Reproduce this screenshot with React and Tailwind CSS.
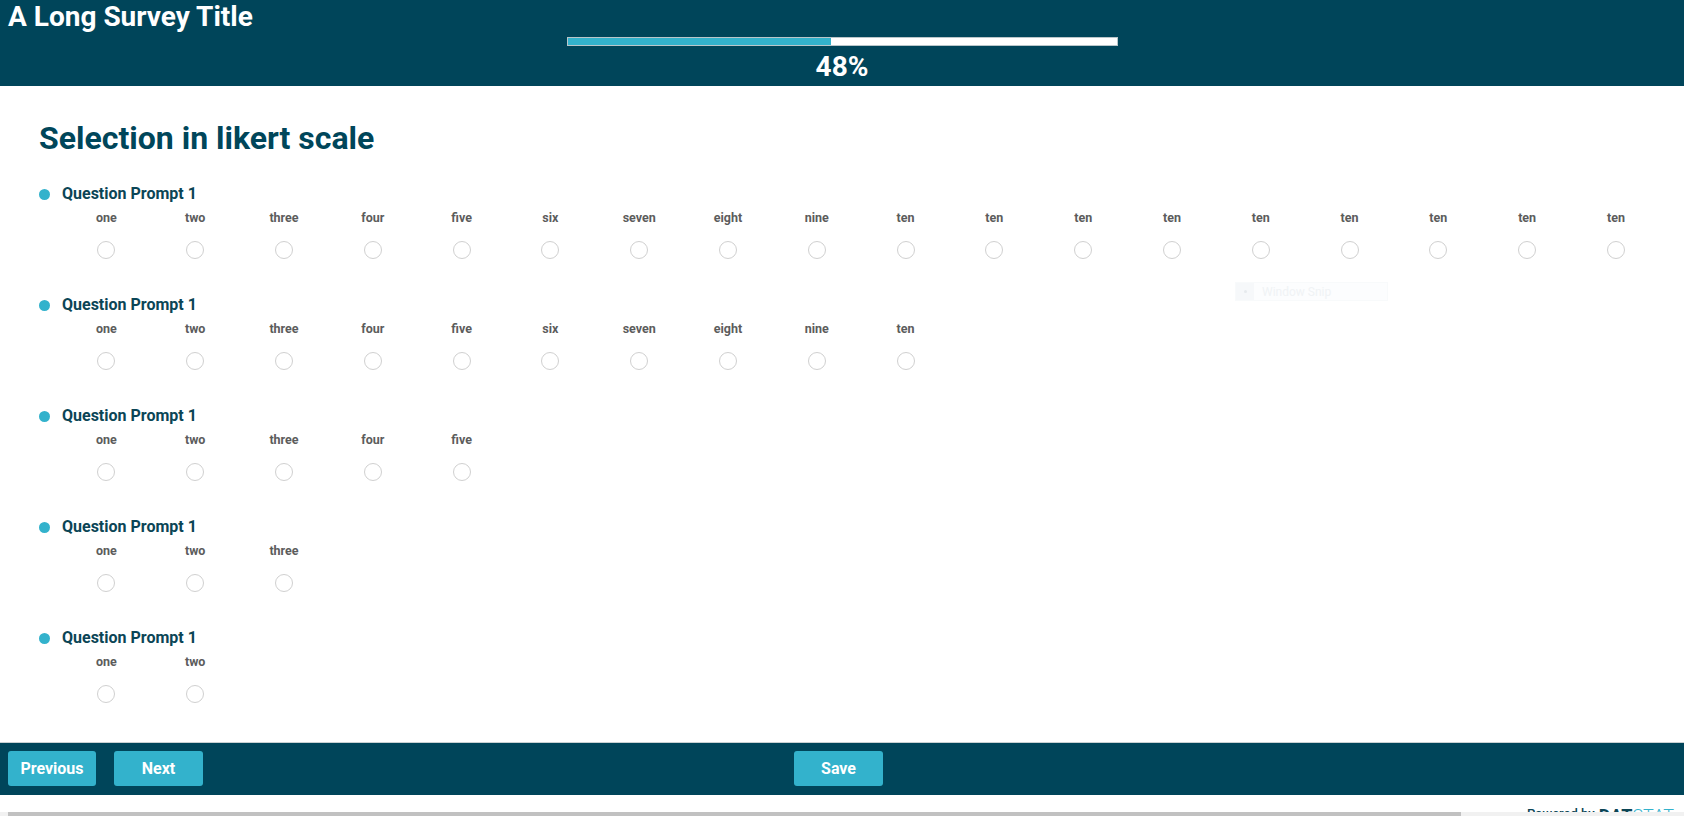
import React from 'react'

const QUESTIONS = [
  ['one', 'two', 'three', 'four', 'five', 'six', 'seven', 'eight', 'nine', 'ten', 'ten', 'ten', 'ten', 'ten', 'ten', 'ten', 'ten', 'ten'],
  ['one', 'two', 'three', 'four', 'five', 'six', 'seven', 'eight', 'nine', 'ten'],
  ['one', 'two', 'three', 'four', 'five'],
  ['one', 'two', 'three'],
  ['one', 'two']
]

function Question({ options }) {
  return (
    <div>
      <div className="flex h-5 items-center gap-3">
        <span className="size-[11px] rounded-full bg-[#33b2cc]" />
        <span className="text-[16px] leading-5 font-bold text-[#0b4556]">Question Prompt 1</span>
      </div>
      <div className="ml-[23px] mt-[6px] flex">
        {options.map((o, i) => (
          <label key={i} className="flex w-[88.8px] shrink-0 flex-col items-center">
            <span className="text-[12.5px] leading-4 font-bold text-[#5c5c5c]">{o}</span>
            <span className="mt-[15px] size-[18px] rounded-full border border-[#d0d0d0] bg-white" />
          </label>
        ))}
      </div>
    </div>
  )
}

export default function App() {
  return (
    <div className="flex h-[816px] w-full flex-col overflow-hidden bg-white font-[Roboto,sans-serif]">
      <header className="flex h-[86px] shrink-0 flex-col bg-[#00455a]">
        <h1 className="pl-2 pt-[3px] text-[28px] leading-[28px] font-bold text-white">A Long Survey Title</h1>
        <div className="mx-auto mt-[6px] h-[9px] w-[551px] border border-[#b9c6ca] bg-white">
          <div className="h-full w-[48%] bg-[#33b2cc]" />
        </div>
        <div className="mt-[7px] text-center text-[28px] leading-[28px] font-bold text-white">48%</div>
      </header>

      <main className="relative flex-1 overflow-hidden pl-[39px] pt-[34px]">
        <h2 className="text-[32px] leading-9 font-bold text-[#00465a]">Selection in likert scale</h2>
        <div className="mt-[28px] flex flex-col gap-9">
          {QUESTIONS.map((opts, i) => <Question key={i} options={opts} />)}
        </div>

        {/* faint leftover snip overlay */}
        <div className="absolute left-[1235px] top-[196px] flex h-[19px] w-[153px] items-center border border-[#f8fafb] bg-[#fcfdfe]">
          <div className="flex h-full w-[18px] items-center justify-center bg-[#f6f8fa]">
            <span className="size-[3px] rounded-full bg-[#e6eaed]" />
          </div>
          <span className="pl-2 text-[12px] text-[#f0f3f5]">Window Snip</span>
        </div>
      </main>

      <footer className="flex h-[53px] shrink-0 items-start border-t border-[#c9d1d3] bg-[#00455a] pl-2 pt-[8px]">
        <button className="h-[35px] w-[88px] rounded-[3px] bg-[#33b2cc] text-[16px] font-bold text-white">Previous</button>
        <button className="ml-[18px] h-[35px] w-[89px] rounded-[3px] bg-[#33b2cc] text-[16px] font-bold text-white">Next</button>
        <button className="ml-[591px] h-[35px] w-[89px] rounded-[3px] bg-[#33b2cc] text-[16px] font-bold text-white">Save</button>
      </footer>

      <div className="flex h-[17px] shrink-0 items-start justify-end overflow-hidden bg-white pr-[10px]">
        <div className="mt-[12px] flex items-start whitespace-nowrap leading-none">
          <span className="text-[13px] font-medium text-[#0b4556]">Powered by</span>
          <span className="ml-1 text-[18px] font-bold text-[#0b4556]">DAT</span>
          <span className="text-[18px] font-light text-[#33b2cc]">STAT</span>
        </div>
      </div>

      <div className="h-1 shrink-0 bg-[#f1f1f1] pl-2">
        <div className="h-full w-[1453px] bg-[#c1c1c1]" />
      </div>
    </div>
  )
}
